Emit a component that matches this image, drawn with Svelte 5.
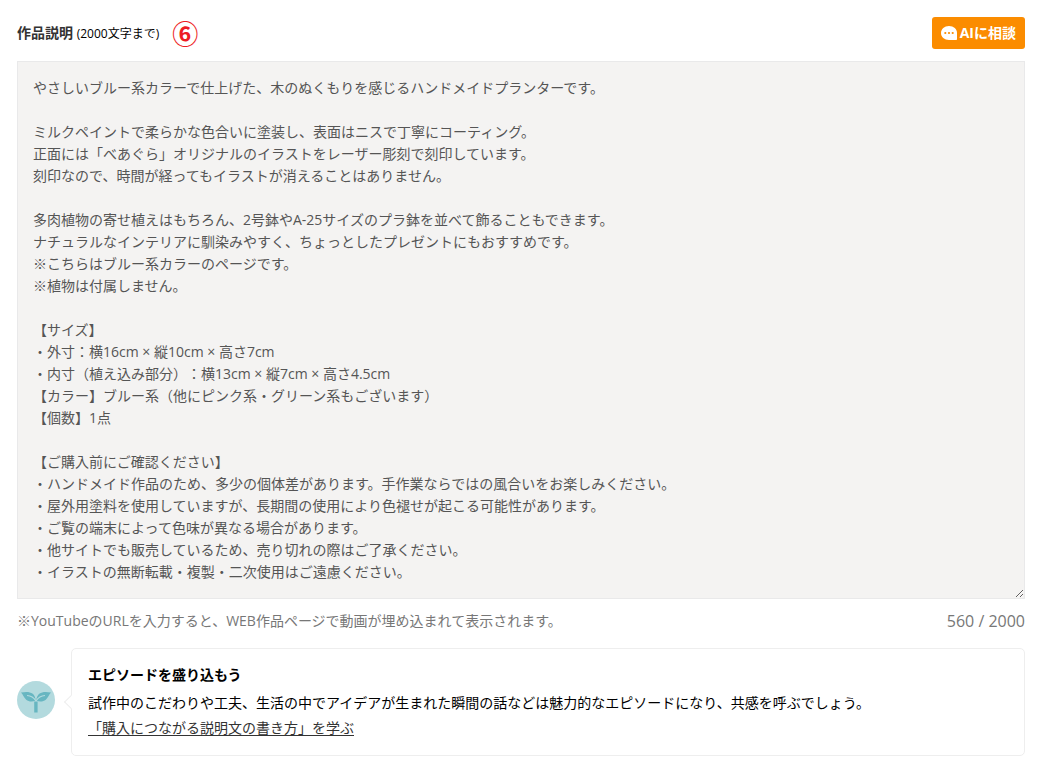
<script>
  const limit = 2000;
  const used = 560;

  let description = $state(`やさしいブルー系カラーで仕上げた、木のぬくもりを感じるハンドメイドプランターです。

ミルクペイントで柔らかな色合いに塗装し、表面はニスで丁寧にコーティング。
正面には「べあぐら」オリジナルのイラストをレーザー彫刻で刻印しています。
刻印なので、時間が経ってもイラストが消えることはありません。

多肉植物の寄せ植えはもちろん、2号鉢やA-25サイズのプラ鉢を並べて飾ることもできます。
ナチュラルなインテリアに馴染みやすく、ちょっとしたプレゼントにもおすすめです。
※こちらはブルー系カラーのページです。
※植物は付属しません。

【サイズ】
・外寸：横16cm × 縦10cm × 高さ7cm
・内寸（植え込み部分）：横13cm × 縦7cm × 高さ4.5cm
【カラー】ブルー系（他にピンク系・グリーン系もございます）
【個数】1点

【ご購入前にご確認ください】
・ハンドメイド作品のため、多少の個体差があります。手作業ならではの風合いをお楽しみください。
・屋外用塗料を使用していますが、長期間の使用により色褪せが起こる可能性があります。
・ご覧の端末によって色味が異なる場合があります。
・他サイトでも販売しているため、売り切れの際はご了承ください。
・イラストの無断転載・複製・二次使用はご遠慮ください。`);
</script>

<section class="field">
  <header class="head">
    <label for="description"><strong>作品説明</strong> <small>(2000文字まで)</small></label>
    <span class="step">⑥</span>
    <button type="button" class="consult">
      <svg width="16" height="14" viewBox="0 0 16 14" aria-hidden="true">
        <path fill="#fff" d="M8 0C3.400 0 0 3 0 7s3.400 7 8 7h7.200q.8 0 .8-.8V7C16 3 12.600 0 8 0Z" />
        <circle cx="4.300" cy="7" r="1.100" fill="#fb8c00" />
        <circle cx="8" cy="7" r="1.100" fill="#fb8c00" />
        <circle cx="11.700" cy="7" r="1.100" fill="#fb8c00" />
      </svg>
      AIに相談
    </button>
  </header>

  <textarea id="description" rows="23" spellcheck="false" bind:value={description}></textarea>

  <div class="notes">
    <p>※YouTubeのURLを入力すると、WEB作品ページで動画が埋め込まれて表示されます。</p>
    <output for="description">{used} / {limit}</output>
  </div>

  <aside class="tip">
    <svg class="sprout" width="38" height="38" viewBox="0 0 38 38" aria-hidden="true">
      <circle cx="19" cy="19" r="19" fill="#b3dade" />
      <g fill="#67b6c1">
        <path d="M17.200 20.500h3.400V31.500h-3.400z" />
        <path d="M4 11.500c5-1 9-.8 11.400 1 2 1.500 3.200 4 3.200 7.200-3.600 1.200-7 1-9.400-1C6.900 17 6.200 13.400 4 11.500Z" />
        <path d="M34 11.500c-5-1-9-.8-11.400 1-2 1.500-3.200 4-3.400 7.200 3.600 1.200 7.200 1 9.600-1 2.300-1.700 3-5.300 5.200-7.200Z" />
      </g>
      <path d="M10 14.500c4 .2 6.800 2 8.900 5.500M28 14.500c-4 .2-6.800 2-8.900 5.500" fill="none" stroke="#b3dade" stroke-width="1.200" />
    </svg>
    <div class="bubble">
      <h2>エピソードを盛り込もう</h2>
      <p>試作中のこだわりや工夫、生活の中でアイデアが生まれた瞬間の話などは魅力的なエピソードになり、共感を呼ぶでしょう。</p>
      <a href="#guide">「購入につながる説明文の書き方」を学ぶ</a>
    </div>
  </aside>
</section>

<style>
  :global(body) {
    margin: 0;
    background: #fff;
    text-spacing-trim: space-all;
  }

  .field {
    padding: 17px 16px 15px 17px;
    font-family: "Open Sans", "Noto Sans CJK JP", sans-serif;
    font-size: 14px;
    line-height: 22px;
    color: #000;
  }

  .head {
    display: flex;
    align-items: center;
    height: 32px;
    margin-bottom: 12px;
  }

  strong {
    color: #333;
  }

  small {
    font-size: 12px;
  }

  .step {
    margin-left: 13px;
    font-family: "Noto Sans CJK JP", sans-serif;
    font-size: 26px;
    font-weight: bold;
    color: #ed1c24;
  }

  .consult {
    display: flex;
    align-items: center;
    gap: 3px;
    height: 32px;
    margin-left: auto;
    padding: 0 9px;
    border: 0;
    border-radius: 3px;
    background: #fb8c00;
    color: #fff;
    font: inherit;
    font-weight: bold;
    white-space: nowrap;
    cursor: pointer;
  }

  textarea {
    display: block;
    box-sizing: border-box;
    width: 100%;
    padding: 15px;
    border: 1px solid #e9e9ea;
    border-radius: 0;
    outline: 0;
    overflow: auto;
    background: #f4f3f2;
    color: #555;
    font: inherit;
    text-spacing-trim: space-all;
    resize: vertical;
  }

  .notes {
    display: flex;
    justify-content: space-between;
    gap: 16px;
    margin: 11px 0 16px;
    color: #777;
  }

  p {
    margin: 0;
  }

  output {
    font-size: 16px;
    white-space: nowrap;
  }

  .tip {
    display: flex;
    align-items: center;
    gap: 16px;
  }

  .sprout {
    flex: none;
    margin-bottom: 4px;
  }

  .bubble {
    position: relative;
    flex: 1;
    padding: 15px 16px;
    border: 1px solid #eee;
    border-radius: 5px;
    line-height: 25px;
  }

  .bubble::before {
    content: "";
    position: absolute;
    top: 48px;
    left: -6px;
    width: 9px;
    height: 9px;
    border: solid #eee;
    border-width: 0 0 1px 1px;
    background: #fff;
    transform: rotate(45deg);
  }

  h2 {
    margin: 0 0 4px;
    font-size: 14px;
    line-height: 22px;
  }

  a {
    color: #333;
    text-underline-offset: 2px;
  }
</style>
